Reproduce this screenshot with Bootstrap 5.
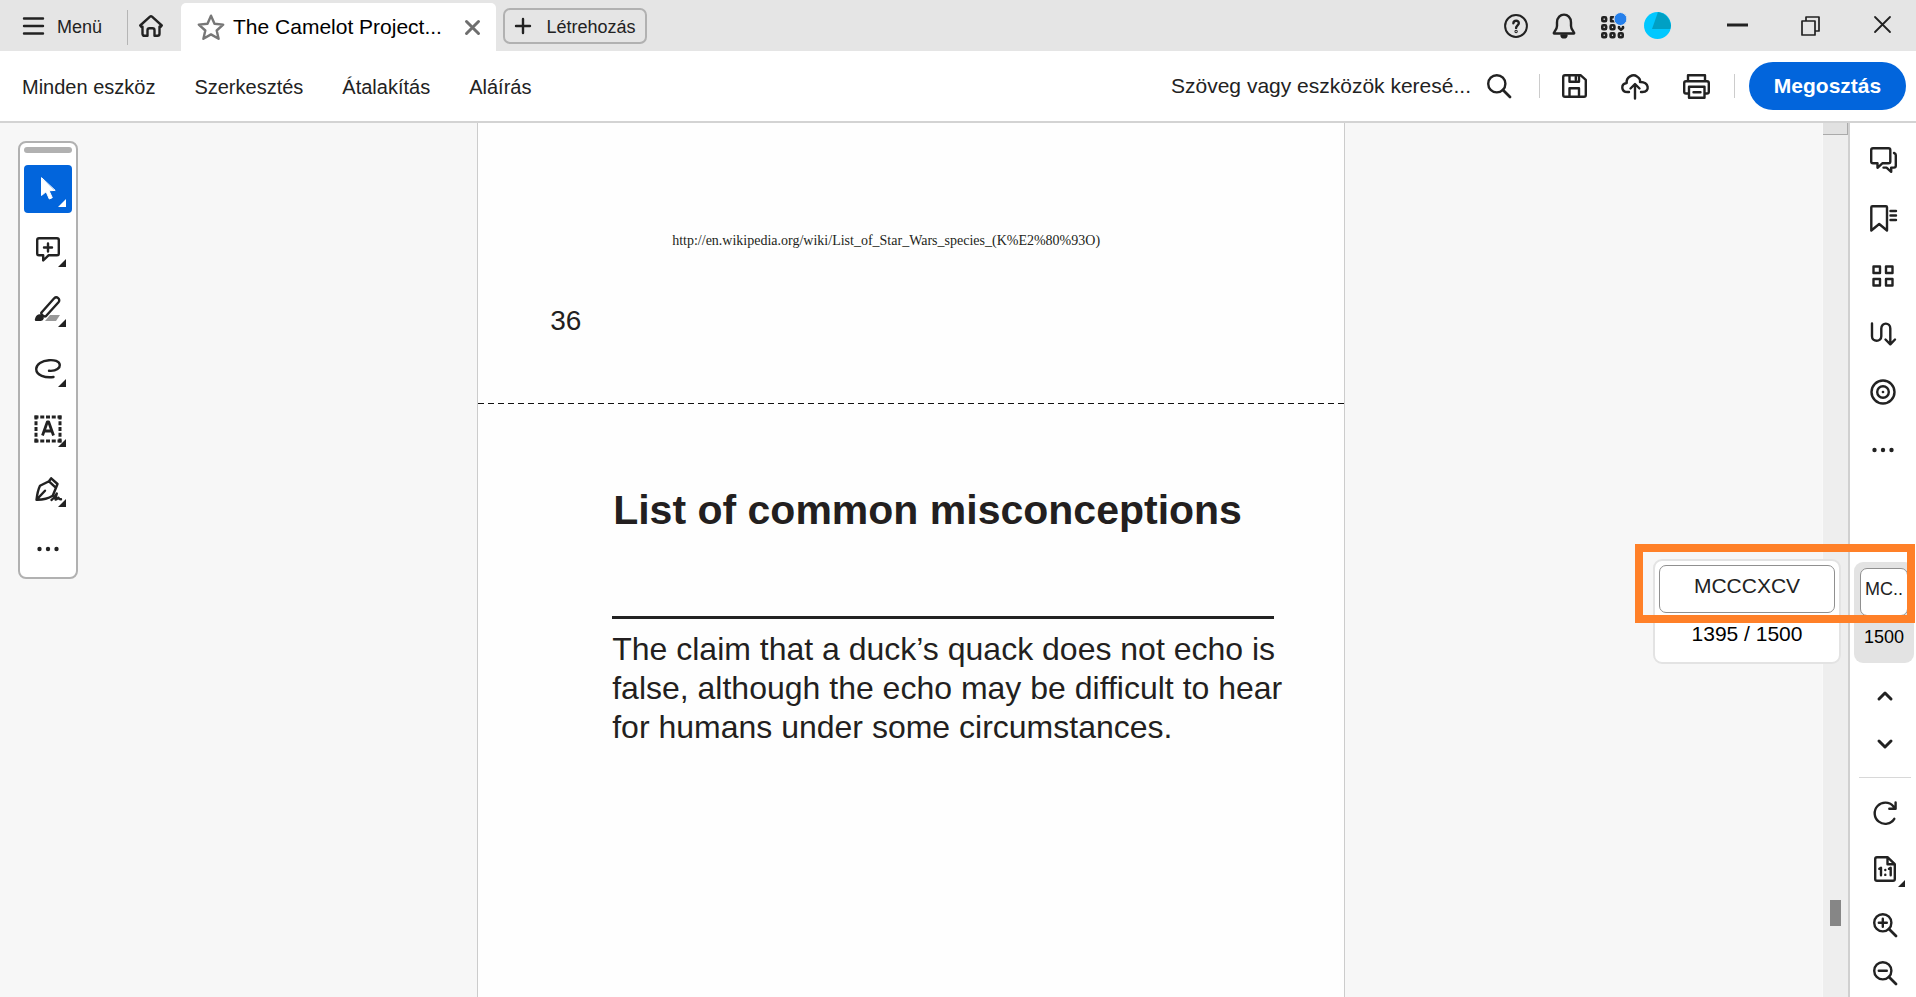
<!DOCTYPE html>
<html lang="hu">
<head>
<meta charset="utf-8">
<meta name="viewport" content="width=device-width, initial-scale=1">
<title>The Camelot Project</title>
<link href="https://cdn.jsdelivr.net/npm/bootstrap@5.3.0/dist/css/bootstrap.min.css" rel="stylesheet">
<style>
  body { font-family: "Liberation Sans", Arial, sans-serif; color: #222; font-size: 21px; line-height: 24px; }
  button { color: inherit; }
  svg { display: block; flex: none; fill: none; stroke: #222; stroke-width: 2.4; stroke-linecap: round; stroke-linejoin: round; overflow: visible; }
  .plain { background: none; border: 0; padding: 0; display: flex; align-items: center; justify-content: center; }

  .titlebar { height: 51px; background: #e5e5e5; padding-left: 23px; font-size: 18px; }
  .titlebar span { padding-top: 2px; }
  .menu-btn { gap: 13px; }
  .bar-split { width: 1px; height: 35px; background: #b5b5b5; margin: 4px 11px 0 25px; }
  .doc-tab { width: 315px; background: #fff; border-radius: 5px 5px 0 0; margin: 3px 7px 0 18px; padding: 0 16px; font-size: 21px; color: #000; }
  .doc-tab span { padding: 0; }
  .create-btn { height: 36px; border: 2px solid #b1b1b1; border-radius: 7px; width: 144px; margin-top: 8px; }
  .window-icons { padding-right: 25px; }
  .restore-btn { margin: 0 54px 0 53px; }
  .apps-btn { margin-right: 18px; }

  .toolbar { height: 72px; border-bottom: 2px solid #d3d3d3; padding: 0 10px 0 22px; }
  .toolbar a { color: #222; text-decoration: none; }
  .menu-links { gap: 39px; font-size: 20px; padding-top: 2px; }
  .find-box { width: 306px; border: 0; padding: 0; outline: 0; color: #222; background: none; margin-right: 10px; }
  .find-box::placeholder { color: #222; opacity: 1; }
  .tool-split { width: 1px; height: 24px; background: #ccc; }
  .tool-split.first { margin: 0 22px 0 28px; }
  .tool-split.last { margin: 0 14px 0 24px; }
  .upload-btn { margin: 0 34px; }
  .share-btn { height: 48px; width: 157px; border-radius: 24px; background: #0265dc; color: #fff; font-weight: 700; font-size: 21px; border: 0; padding: 0; }

  .workspace { background: #f7f7f7; display: grid; grid-template-columns: minmax(0, 11fr) minmax(0, 20fr) minmax(0, 11fr); }
  .palette { width: 60px; margin: 18px 0 0 18px; background: #fff; border: 2px solid #b1b1b1; border-radius: 8px; padding: 4px 4px; gap: 12px; }
  .grip { height: 6px; width: 48px; border-radius: 3px; background: #b1b1b1; }
  .tool { width: 48px; height: 48px; border-radius: 4px; position: relative; }
  .tool.chosen { background: #0265dc; }
  .flyout::after { content: ""; position: absolute; right: 6px; bottom: 6px; border-left: 8px solid transparent; border-bottom: 8px solid #222; }
  .chosen.flyout::after { border-bottom-color: #fff; }

  .sheet { background: #fefefe; border: solid #ccc; border-width: 0 1px; color: #231f20; }
  .sheet-end { height: 280px; padding-top: 106px; }
  .source-url { font-family: "Liberation Serif", serif; font-size: 14px; margin: 0 0 0 194px; }
  .folio { font-size: 28px; line-height: 32px; margin: 52px 0 0 72px; }
  .sheet-cut { height: 1px; background: repeating-linear-gradient(90deg, #111 0 6px, transparent 6px 10px); }
  .article { padding: 81px 70px 0 134px; }
  .article h1 { font-size: 41px; line-height: 50px; font-weight: 700; margin: 0; white-space: nowrap; padding-left: 1px; }
  .article hr { border: 0; height: 3px; background: #222; opacity: 1; margin: 81px 0 11px; }
  .article p { font-size: 32px; line-height: 39px; margin: 0; white-space: nowrap; }

  .scroll-track { width: 26px; background: #eee; border-left: 1px solid #f9f9f9; }
  .scroll-top { height: 12px; background: #e1e1e1; border: solid #aaa; border-width: 0 1px 1px 0; }
  .scroll-thumb { height: 26px; width: 11px; background: #868686; margin: 0 7px 71px; }

  .rail { width: 68px; background: #fff; border-left: 2px solid #d0d0d0; padding-top: 8px; }
  .rail-btn { width: 58px; height: 58px; position: relative; flex: none; }
  .rail-low { padding-left: 3px; }
  .rail-low .rail-btn { height: 56px; }
  .rail-low .rail-btn.tight { height: 48px; }
  .rail-btn.flyout::after { right: 9px; bottom: 10px; border-left-width: 7px; border-bottom-width: 7px; }
  .rail hr { width: 52px; margin: 9px 0 7px; border: 0; height: 1px; background: #d8d8d8; opacity: 1; flex: none; }

  .pager { position: relative; width: 60px; height: 101px; margin: 83px 2px 9px 4px; background: #e3e3e3; border-radius: 9px; padding: 6px 6px 0; color: #000; flex: none; }
  .page-box { width: 100%; height: 48px; background: #fff; color: #222; border: 1px solid #909090; border-radius: 7px; padding: 0 0 6px; text-align: center; }
  .page-total { margin-top: 9px; }
  .pager-mini { font-size: 18px; line-height: 24px; text-align: center; }
  .pager-mini .page-box { padding: 0 4px 6px; }
  .pager-pop { position: absolute; top: -3px; right: calc(100% + 13px); width: 188px; height: 105px; background: #fff; border: 2px solid #e3e3e3; border-radius: 9px; padding: 4px; text-align: center; }
  .pager-mark { position: absolute; top: -18px; bottom: 40px; left: -219px; right: -1px; border: 8px solid #ff8028; pointer-events: none; }
</style>
</head>
<body class="vh-100 overflow-hidden d-flex flex-column bg-white">

<header class="titlebar d-flex flex-shrink-0">
  <button class="plain menu-btn" type="button">
    <svg width="21" height="18" viewBox="0 0 21 18"><path d="M1 1.500h19M1 9h19M1 16.500h19"/></svg>
    <span>Menü</span>
  </button>
  <div class="bar-split align-self-center"></div>
  <button class="plain" type="button" aria-label="Kezdőlap">
    <svg width="24" height="22" viewBox="0 0 24 22"><path d="M1.200 10.500 11 1.700q1-.9 2 0l9.800 8.800-1.500 1.700-.8-.6v7.200q0 2-2 2h-3v-5.600q0-2-2-2h-3q-2 0-2 2v5.600h-3q-2 0-2-2v-7.200l-.8.600z"/></svg>
  </button>
  <div class="doc-tab d-flex align-items-center">
    <button class="plain" type="button" aria-label="Csillag">
      <svg width="28" height="26" viewBox="0 0 28 26" style="stroke:#777"><path d="M14 1.700l3.500 8.100 8.700.8-6.500 5.900 1.900 8.300-7.600-4.400-7.600 4.400 1.900-8.300-6.500-5.900 8.700-.8z"/></svg>
    </button>
    <span class="text-nowrap flex-grow-1 ms-2">The Camelot Project...</span>
    <button class="plain" type="button" aria-label="Lap bezárása">
      <svg width="15" height="15" viewBox="0 0 15 15" style="stroke:#6e6e6e;stroke-width:3"><path d="M1.500 1.500l12 12M13.500 1.500l-12 12"/></svg>
    </button>
  </div>
  <button class="create-btn plain gap-3" type="button">
    <svg width="16" height="16" viewBox="0 0 16 16"><path d="M8 1v14M1 8h14"/></svg>
    <span>Létrehozás</span>
  </button>
  <div class="window-icons d-flex align-items-center ms-auto">
    <button class="plain me-4" type="button" aria-label="Súgó">
      <svg width="24" height="24" viewBox="0 0 24 24"><circle cx="12" cy="12" r="10.900" stroke-width="2"/><path d="M9.400 9.300c.2-3.400 5.600-3.300 5.400 0-.1 2-2.700 2.200-2.700 4.600"/><circle cx="12.100" cy="17.500" r=".5"/></svg>
    </button>
    <button class="plain me-4" type="button" aria-label="Értesítések">
      <svg width="24" height="26" viewBox="0 0 24 26"><path d="M2 20.500c-1.200-1.600 3-3 3-7.500V9.500c0-10.500 14-10.500 14 0V13c0 4.500 4.200 5.900 3 7.500z"/><path d="M9.500 22.500c.5 2.500 4.500 2.500 5 0z" fill="#222"/></svg>
    </button>
    <button class="plain apps-btn" type="button" aria-label="Alkalmazások">
      <svg width="26" height="26" viewBox="0 0 26 26"><g style="stroke-width:2.600"><rect x="2.300" y="4.300" width="3.800" height="4" rx="1"/><path d="M13.500 4.300h-2.400v4h3.500"/><rect x="2.300" y="12.300" width="3.800" height="4" rx="1"/><rect x="10.600" y="12.300" width="3.800" height="4" rx="1"/><path d="M19 14v1l2 1.800 2-1.800v-1"/><rect x="2.300" y="20.300" width="3.800" height="4" rx="1"/><rect x="10.600" y="20.300" width="3.800" height="4" rx="1"/><rect x="18.900" y="20.300" width="3.800" height="4" rx="1"/></g><circle cx="20.500" cy="6" r="6.500" fill="#2680eb" style="stroke:#e5e5e5;stroke-width:1"/></svg>
    </button>
    <button class="plain me-5" type="button" aria-label="Fiók">
      <svg width="27" height="27" viewBox="0 0 27 27" style="stroke:none"><circle cx="13.500" cy="13.500" r="13.500" fill="#00c8ff"/><path d="M14 0q11 1.500 13 13.500l-.8 3.500H8z" fill="#00a0c4"/></svg>
    </button>
    <button class="plain ms-2" type="button" aria-label="Kis méret">
      <svg width="21" height="20" viewBox="0 0 21 20"><path d="M0 9h21" style="stroke-width:3;stroke-linecap:butt"/></svg>
    </button>
    <button class="plain restore-btn" type="button" aria-label="Előző méret">
      <svg width="19" height="20" viewBox="0 0 19 20" style="stroke-width:1.700"><path d="M1 5h13v14H1zM5 5V1h13v14h-4"/></svg>
    </button>
    <button class="plain" type="button" aria-label="Bezárás">
      <svg width="17" height="17" viewBox="0 0 17 17" style="stroke-width:1.800"><path d="M1 0l15 15M16 0L1 15"/></svg>
    </button>
  </div>
</header>

<nav class="toolbar d-flex align-items-center flex-shrink-0" aria-label="Eszköztár">
  <div class="menu-links d-flex text-nowrap">
    <a href="#">Minden eszköz</a>
    <a href="#">Szerkesztés</a>
    <a href="#">Átalakítás</a>
    <a href="#">Aláírás</a>
  </div>
  <div class="d-flex align-items-center ms-auto">
    <input class="find-box" type="text" aria-label="Keresés" placeholder="Szöveg vagy eszközök keresé...">
    <button class="plain" type="button" aria-label="Keresés">
      <svg width="24" height="24" viewBox="0 0 24 24"><circle cx="9.800" cy="9.800" r="8.600"/><path d="M16 16l7 7" style="stroke-width:2.800"/></svg>
    </button>
    <div class="tool-split first"></div>
    <button class="plain" type="button" aria-label="Mentés">
      <svg width="25" height="24" viewBox="0 0 25 24"><path d="M3 1.200h15.500l5.300 4.600V21q0 1.800-1.800 1.800H3Q1.200 22.800 1.200 21V3Q1.200 1.200 3 1.200zM7.500 1.500v6.300h9.500V1.500M13.800 3v2.500M7.500 22.500v-8.200h9.500v8.200"/></svg>
    </button>
    <button class="plain upload-btn" type="button" aria-label="Feltöltés">
      <svg width="28" height="25" viewBox="0 0 28 25"><path d="M8 18H6.500c-6.600 0-7-8.200-.8-9C5 3 12-.5 16 2.500c2.600 1.500 3.300 4 3 5.500 9-.5 10.500 10 2.500 10H20M14 24.500V10.500M9.500 14.500l4.500-4.500 4.500 4.500"/></svg>
    </button>
    <button class="plain" type="button" aria-label="Nyomtatás">
      <svg width="27" height="25" viewBox="0 0 27 25"><path d="M5 6.500V1.200h17v5.300M5 19.500H3q-1.800 0-1.800-1.800V9Q1.200 7.200 3 7.200h21q1.800 0 1.800 1.800v8.700q0 1.800-1.800 1.800h-2M6 12.800h15.500v11H6zM10.500 18.300h7"/></svg>
    </button>
    <div class="tool-split last"></div>
    <button class="share-btn" type="button">Megosztás</button>
  </div>
</nav>

<main class="d-flex flex-grow-1 overflow-hidden">
  <div class="workspace flex-grow-1">
    <aside class="palette d-flex flex-column align-self-start">
      <div class="grip"></div>
      <button class="plain tool chosen flyout" type="button" aria-label="Kijelölés">
        <svg width="16" height="24" viewBox="0 0 16 24"><path d="M1.500 1v17.500l4.600-3.700 3.200 7.200 3-1.300-3.200-6.900 5.700-.4z" fill="#fff" style="stroke:#fff;stroke-width:1"/></svg>
      </button>
      <button class="plain tool flyout" type="button" aria-label="Megjegyzés">
        <svg width="24" height="25" viewBox="0 0 24 25"><path d="M3 1.200h18q1.800 0 1.800 1.800v13.500q0 1.800-1.800 1.800h-8.500L7.200 23.500v-5.200H3q-1.800 0-1.800-1.800V3Q1.200 1.200 3 1.200zM12 6.500v8M8 10.500h8"/></svg>
      </button>
      <button class="plain tool flyout" type="button" aria-label="Kiemelés">
        <svg width="26" height="26" viewBox="0 0 26 26"><path d="M15 19h10l-4 6H10z" fill="#999" style="stroke:none"/><path d="M6.500 16.500 19.200 2.300c1.500-1.500 3-1 4-.1 1.200 1 1.500 2.600.3 4L10.800 20.300c-1.600 1-5.400-2-4.300-3.800z"/><path d="M1 23.800c1-5 4-4.600 5.800-3.800 1.500 1 1 3.800-1 3.800z" fill="#222"/></svg>
      </button>
      <button class="plain tool flyout" type="button" aria-label="Rajzolás">
        <svg width="26" height="20" viewBox="0 0 26 20"><path d="M14 11.800C22 12.500 25 8.500 24.800 6 24.500 2 19 .8 14 1.200 7 1.800 1.200 5 1.200 10c0 6.500 9 9 17.300 8"/></svg>
      </button>
      <button class="plain tool flyout" type="button" aria-label="Szöveg">
        <svg width="28" height="28" viewBox="0 0 28 28"><g style="stroke-linecap:butt;stroke-width:3"><path d="M.500 2h27M.500 26h27" stroke-dasharray="4 1.750"/><path d="M2 .500v27M26 .500v27" stroke-dasharray="4 1.750"/></g><path d="M8.500 20.500 13.300 7h1.400l4.800 13.500M10.500 16h7" style="stroke-linecap:butt;stroke-width:2.800"/></svg>
      </button>
      <button class="plain tool flyout" type="button" aria-label="Aláírás tolla">
        <svg width="27" height="25" viewBox="0 0 27 25"><path d="M1.500 22.800Q2.500 14 5 8.800L14 4.300l7 6.500-3.300 8Q11 23 1.500 22.800zM14 4.300l2.200-3 6.300 5.700-1.500 3.800M2 22.300l8-8.600M16.500 23c2.500-1.500 3.800-3.500 5.300-6.500-.8 3-1.600 5-1.300 6 1.500.5 2-1.500 3-1.800.6.300-.2 1.800 2.500 1.600"/></svg>
      </button>
      <button class="plain tool" type="button" aria-label="Továbbiak">
        <svg width="22" height="5" viewBox="0 0 22 5"><g fill="#222" style="stroke:none"><circle cx="2.500" cy="2" r="2.200"/><circle cx="11" cy="2" r="2.200"/><circle cx="19.500" cy="2" r="2.200"/></g></svg>
      </button>
    </aside>

    <div class="sheet">
      <section class="sheet-end">
        <p class="source-url">http://en.wikipedia.org/wiki/List_of_Star_Wars_species_(K%E2%80%93O)</p>
        <div class="folio">36</div>
      </section>
      <div class="sheet-cut"></div>
      <section class="article">
        <h1>List of common misconceptions</h1>
        <hr>
        <p>The claim that a duck’s quack does not echo is<br>false, although the echo may be difficult to hear<br>for humans under some circumstances.</p>
      </section>
    </div>
  </div>

  <div class="scroll-track d-flex flex-column justify-content-between flex-shrink-0">
    <div class="scroll-top"></div>
    <div class="scroll-thumb"></div>
  </div>

  <aside class="rail d-flex flex-column align-items-center flex-shrink-0">
    <button class="plain rail-btn" type="button" aria-label="Megjegyzések">
      <svg width="27" height="26" viewBox="0 0 27 26"><path d="M3 1.200h15.500q1.800 0 1.800 1.800v11.500q0 1.800-1.800 1.800h-6.200l-4.800 4.500v-4.500H3q-1.800 0-1.800-1.800V3Q1.200 1.200 3 1.200zM24 6q1.800.6 1.800 2v10.800q0 1.800-1.800 1.800h-2.800v4.200l-4.700-4.200h-3"/></svg>
    </button>
    <button class="plain rail-btn" type="button" aria-label="Könyvjelzők">
      <svg width="27" height="27" viewBox="0 0 27 27"><path d="M2.500 1.200H16q1 0 1 1v23.300l-7.800-6.500-7.900 6.500V2.200q0-1 1.200-1zM20.500 6h5.500M20.500 10.500h5.500M20.500 15h5.500"/></svg>
    </button>
    <button class="plain rail-btn" type="button" aria-label="Oldalak">
      <svg width="22" height="22" viewBox="0 0 22 22"><path d="M1.500 1.500h6.500v6.500H1.500zM14 1.500h6.500v6.500H14zM1.500 14h6.500v6.500H1.500zM14 14h6.500v6.500H14z"/></svg>
    </button>
    <button class="plain rail-btn" type="button" aria-label="Sorrend">
      <svg width="26" height="24" viewBox="0 0 26 24"><path d="M2 1.500v12.800c0 6 9.300 6 9.300 0V6.500c0-6.500 9-6.500 9 0V22M15.500 17.500l4.800 4.800 4.700-4.800"/></svg>
    </button>
    <button class="plain rail-btn" type="button" aria-label="Cél">
      <svg width="26" height="26" viewBox="0 0 26 26"><circle cx="13" cy="13" r="11.500"/><circle cx="13" cy="13" r="5.800"/><circle cx="13" cy="13" r=".6" style="stroke-width:1.500"/></svg>
    </button>
    <button class="plain rail-btn" type="button" aria-label="Továbbiak">
      <svg width="22" height="5" viewBox="0 0 22 5"><g fill="#222" style="stroke:none"><circle cx="2.500" cy="2" r="2.200"/><circle cx="11" cy="2" r="2.200"/><circle cx="19.500" cy="2" r="2.200"/></g></svg>
    </button>

    <div class="pager">
      <div class="pager-mini">
        <input class="page-box" type="text" value="MC.." aria-label="Oldal">
        <div class="page-total">1500</div>
      </div>
      <div class="pager-pop">
        <input class="page-box" type="text" value="MCCCXCV" aria-label="Oldalcímke">
        <div class="page-total">1395 / 1500</div>
      </div>
      <div class="pager-mark"></div>
    </div>

    <div class="rail-low d-flex flex-column align-items-center">
      <button class="plain rail-btn tight" type="button" aria-label="Előző oldal">
        <svg width="16" height="10" viewBox="0 0 16 10" style="stroke-width:3"><path d="M2 8l6-6 6 6"/></svg>
      </button>
      <button class="plain rail-btn tight" type="button" aria-label="Következő oldal">
        <svg width="16" height="10" viewBox="0 0 16 10" style="stroke-width:3"><path d="M2 2l6 6 6-6"/></svg>
      </button>
      <hr>
      <button class="plain rail-btn" type="button" aria-label="Forgatás">
        <svg width="24" height="24" viewBox="0 0 24 24"><path d="M21.300 17.800A10.600 10.600 0 1 1 20.300 5.300l1.700 2.200M22.600 1.500v6.300h-6.300"/></svg>
      </button>
      <button class="plain rail-btn flyout" type="button" aria-label="Tényleges méret">
        <svg width="22" height="26" viewBox="0 0 22 26"><path d="M3 1.200h10.500l7.300 7V23q0 1.800-1.800 1.800H3q-1.800 0-1.800-1.800V3Q1.200 1.200 3 1.200zM13.500 1.500v6.700h7M5.300 12.800l1.700-1v7.500M15 12.800l1.700-1v7.500"/><path d="M11.300 14v.1M11.300 18.800v.1"/></svg>
      </button>
      <button class="plain rail-btn tight mt-1" type="button" aria-label="Nagyítás">
        <svg width="24" height="24" viewBox="0 0 24 24"><circle cx="9.800" cy="9.800" r="8.600"/><path d="M16 16l7 7" style="stroke-width:2.800"/><path d="M9.800 5.800v8M5.800 9.800h8"/></svg>
      </button>
      <button class="plain rail-btn tight" type="button" aria-label="Kicsinyítés">
        <svg width="24" height="24" viewBox="0 0 24 24"><circle cx="9.800" cy="9.800" r="8.600"/><path d="M16 16l7 7" style="stroke-width:2.800"/><path d="M5.800 9.800h8"/></svg>
      </button>
    </div>
  </aside>
</main>

<script src="https://cdn.jsdelivr.net/npm/bootstrap@5.3.0/dist/js/bootstrap.bundle.min.js"></script>
</body>
</html>
